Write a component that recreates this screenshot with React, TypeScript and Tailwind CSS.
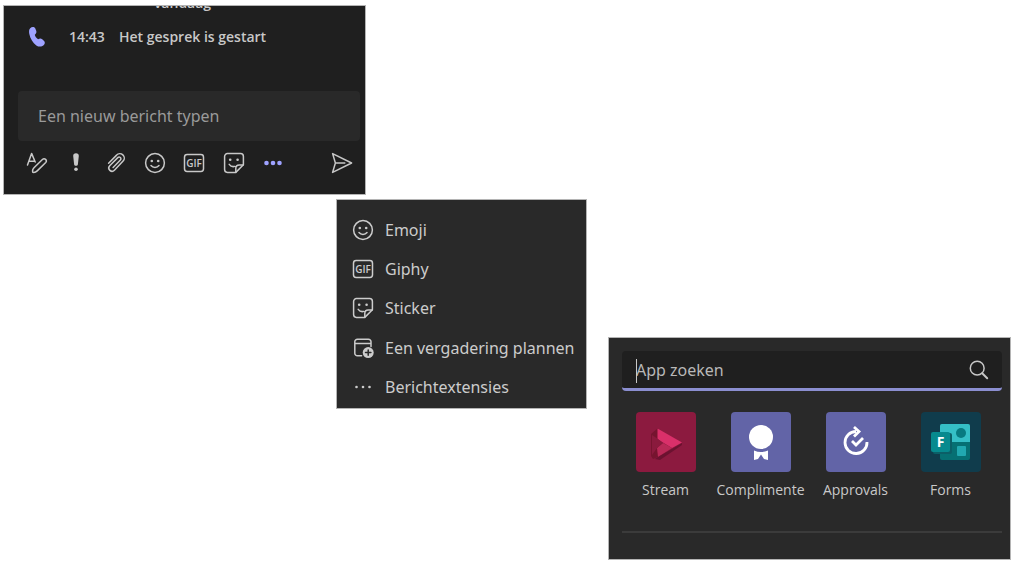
import { ReactNode } from "react";

function Icon({ children, size = 22 }: { children: ReactNode; size?: number }) {
  return (
    <svg
      width={size}
      height={size}
      viewBox="0 0 22 22"
      fill="none"
      stroke="currentColor"
      strokeWidth="1.5"
      strokeLinecap="round"
      strokeLinejoin="round"
      aria-hidden="true"
      className="flex-none"
    >
      {children}
    </svg>
  );
}

function PhoneIcon() {
  return (
    <Icon>
      <path
        d="M3.2 2.2C4.6 .8 7.2 .6 8.2 2.3L9.3 5C9.8 6.7 8.9 7.7 7.8 8.8C8.1 10.5 9.4 12.3 11.1 13.2C12.6 12.5 13.9 12.2 15.2 13.3L17.1 15C18.3 16.3 17.9 18 16.6 19.3C14.7 21 11.7 21 9.3 19.4C5.9 17 3.3 12.6 2.3 8C1.8 5.6 2 3.2 3.2 2.2Z"
        fill="currentColor"
        stroke="none"
      />
    </Icon>
  );
}

function FormatIcon() {
  return (
    <Icon>
      <path d="M1.5 13 5.6 1.4 9.2 10M3 9.2h5.7" />
      <path d="M6.8 20.3c-.6-2 0-3.4 1.2-4.6l8.4-8.2c2.2-2 5.2.8 3.3 3L11.2 18.9C10 20.1 8.6 20.6 6.8 20.3Z" />
    </Icon>
  );
}

function ImportantIcon() {
  return (
    <Icon>
      <path
        d="M11 1.2c1.8 0 2.9 1 2.8 2.7l-.9 8.3c-.1 1-.9 1.6-1.9 1.6s-1.8-.6-1.9-1.6l-.9-8.3C8.1 2.2 9.2 1.2 11 1.2Z"
        fill="currentColor"
        stroke="none"
      />
      <circle cx="11" cy="17.3" r="1.8" fill="currentColor" stroke="none" />
    </Icon>
  );
}

function AttachIcon() {
  return (
    <Icon>
      <path d="M3.6 11.2 11.6 3.1a4.4 4.4 0 0 1 6.5 6L9.4 18.2a3.2 3.2 0 0 1-4.7-4.4l8.1-8.2a1.8 1.8 0 0 1 2.6 2.5l-7.3 7.4" />
    </Icon>
  );
}

function EmojiIcon() {
  return (
    <Icon>
      <circle cx="11" cy="11" r="9.4" />
      <circle cx="7.8" cy="9" r="1.3" fill="currentColor" stroke="none" />
      <circle cx="14.2" cy="9" r="1.3" fill="currentColor" stroke="none" />
      <path d="M7 13.6c2 2.4 6 2.4 8 0" />
    </Icon>
  );
}

function GifIcon() {
  return (
    <Icon>
      <rect x="1.5" y="2.6" width="19" height="16.8" rx="2.6" />
      <text
        x="11"
        y="14.5"
        textAnchor="middle"
        fontSize="10"
        fontWeight="600"
        fontFamily="Open Sans, sans-serif"
        fill="currentColor"
        stroke="none"
      >
        GIF
      </text>
    </Icon>
  );
}

function StickerIcon() {
  return (
    <Icon>
      <path d="M4.4 1.6h13.2a2.8 2.8 0 0 1 2.8 2.8v8.4l-7.6 7.6H4.4a2.8 2.8 0 0 1-2.8-2.8V4.4a2.8 2.8 0 0 1 2.8-2.8Z" />
      <path d="M12.8 20.2v-3.8c0-2 1.4-3.4 3.4-3.4h4M6.2 12.4c1.2 1.6 3.4 2.6 5.6 2" />
      <circle cx="7.2" cy="7.8" r="1.3" fill="currentColor" stroke="none" />
      <circle cx="14.6" cy="7.8" r="1.3" fill="currentColor" stroke="none" />
    </Icon>
  );
}

function MeetingIcon() {
  return (
    <Icon>
      <path d="M9.6 18.8H5.4a2.6 2.6 0 0 1-2.6-2.6V4.8a2.6 2.6 0 0 1 2.6-2.6h11a2.6 2.6 0 0 1 2.6 2.6v4.6M2.8 6.6H19" />
      <circle cx="16.2" cy="15.6" r="5.5" fill="currentColor" stroke="none" />
      <path d="M16.2 12.9v5.4M13.5 15.6h5.4" stroke="#292929" />
    </Icon>
  );
}

function MoreIcon({ radius = 1.3, gap = 6.5 }: { radius?: number; gap?: number }) {
  return (
    <Icon>
      {[11 - gap, 11, 11 + gap].map((x) => (
        <circle key={x} cx={x} cy="11" r={radius} fill="currentColor" stroke="none" />
      ))}
    </Icon>
  );
}

function SendIcon() {
  return (
    <Icon>
      <path d="M1.6 1.6 20.6 11 1.6 20.4 4.4 11ZM4.4 11h9.4" />
    </Icon>
  );
}

function SearchIcon() {
  return (
    <Icon>
      <circle cx="9.2" cy="9.2" r="6.9" />
      <path d="m14.2 14.2 5 5" strokeWidth="2" />
    </Icon>
  );
}

function StreamLogo() {
  return (
    <svg viewBox="0 0 60 60" aria-hidden="true">
      <path d="M15 22 22 16v29l-5 2-2-3Z" fill="#76142f" />
      <path d="M21.5 16.5 46 30.5 36 36 27 30.5 21.5 27Z" fill="#d9306a" />
      <path d="M21 36 27 31 36 36 22 45Z" fill="#b92957" />
      <path d="M22 45 46 31v2L24 48l-5-1Z" fill="#6b1230" />
      <path d="M22 27 27 31 21 36 16 43V23Z" fill="#8a1a3d" />
    </svg>
  );
}

function PraiseLogo() {
  return (
    <svg viewBox="0 0 60 60" fill="#fff" aria-hidden="true">
      <circle cx="30" cy="25" r="12" />
      <path d="M23 38.5c4.5 2 9.5 2 14 0V48l-4-1-3-4.5-3 4.5-4 1Z" />
    </svg>
  );
}

function ApprovalsLogo() {
  return (
    <svg viewBox="0 0 60 60" fill="none" stroke="#fff" strokeWidth="2.8" aria-hidden="true">
      <path d="M30 19.5A11 11 0 1 0 41 30" />
      <path d="m28 15 5 4.5-5 5" />
      <path d="m26 29 4 4 7-7" />
    </svg>
  );
}

function FormsLogo() {
  return (
    <svg viewBox="0 0 60 60" aria-hidden="true">
      <rect x="19" y="12" width="30" height="36" rx="2" fill="#067073" />
      <path d="M21 12h26a2 2 0 0 1 2 2v16H19V14a2 2 0 0 1 2-2Z" fill="#35bfc6" />
      <circle cx="40" cy="21" r="5" fill="#087a80" />
      <rect x="36" y="34" width="9" height="10" rx="1" fill="#21a9b0" />
      <rect x="12" y="21" width="19" height="21" rx="2" fill="#0b5f67" />
      <rect x="10" y="20" width="19" height="20" rx="2" fill="#078a8e" />
      <text
        x="19.5"
        y="35"
        textAnchor="middle"
        fontSize="14"
        fontWeight="700"
        fontFamily="Open Sans, sans-serif"
        fill="#fff"
      >
        F
      </text>
    </svg>
  );
}

const tools = [
  { label: "Opmaak", icon: <FormatIcon /> },
  { label: "Belangrijk", icon: <ImportantIcon /> },
  { label: "Bijvoegen", icon: <AttachIcon /> },
  { label: "Emoji", icon: <EmojiIcon /> },
  { label: "Giphy", icon: <GifIcon /> },
  { label: "Sticker", icon: <StickerIcon /> },
];

const menuItems = [
  { label: "Emoji", icon: <EmojiIcon /> },
  { label: "Giphy", icon: <GifIcon /> },
  { label: "Sticker", icon: <StickerIcon /> },
  { label: "Een vergadering plannen", icon: <MeetingIcon /> },
  { label: "Berichtextensies", icon: <MoreIcon /> },
];

const apps = [
  { name: "Stream", tile: "bg-[#8c1a3f]", logo: <StreamLogo /> },
  { name: "Complimente", tile: "bg-[#6264a7]", logo: <PraiseLogo /> },
  { name: "Approvals", tile: "bg-[#6264a7]", logo: <ApprovalsLogo /> },
  { name: "Forms", tile: "bg-[#103c4c]", logo: <FormsLogo /> },
];

function ComposePanel() {
  return (
    <section className="w-full max-w-[363px] overflow-hidden border border-[#b4b4b4] bg-[#1f1f1f] pb-5 text-[#c8c8c8]">
      <p className="-mt-[13px] pr-1 text-center text-sm font-semibold leading-5">vandaag</p>
      <div className="mt-3 flex h-6 items-center pl-[23px] text-sm font-semibold">
        <span className="w-[42px] text-[#9ea2ff]">
          <PhoneIcon />
        </span>
        <time className="w-[50px]">14:43</time>
        <span>Het gesprek is gestart</span>
      </div>
      <input
        type="text"
        aria-label="Een nieuw bericht typen"
        placeholder="Een nieuw bericht typen"
        className="ml-3.5 mt-[42px] block h-[50px] w-[calc(100%-19px)] rounded bg-[#292929] px-5 font-['Noto_Sans',sans-serif] text-base outline-none placeholder:text-[#9a9a9a]"
      />
      <div className="mt-[11px] flex items-center justify-between pl-[13px] pr-3">
        <div className="grid w-[276px] grid-cols-7">
          {tools.map(({ label, icon }) => (
            <button key={label} type="button" aria-label={label} className="flex justify-center">
              {icon}
            </button>
          ))}
          <button type="button" aria-label="Meer opties" className="flex justify-center text-[#9ea2ff]">
            <MoreIcon radius={2.3} />
          </button>
        </div>
        <button type="button" aria-label="Verzenden">
          <SendIcon />
        </button>
      </div>
    </section>
  );
}

function ExtensionMenu() {
  return (
    <ul className="grid h-[210px] w-[251px] flex-none grid-rows-5 border border-[#b4b4b4] bg-[#292929] pb-px pt-2.5 font-['Noto_Sans',sans-serif] text-[#cccccc]">
      {menuItems.map(({ label, icon }) => (
        <li key={label} className="flex">
          <button type="button" className="flex w-full items-center gap-[11px] whitespace-nowrap pl-[15px] text-left text-base">
            {icon}
            {label}
          </button>
        </li>
      ))}
    </ul>
  );
}

function AppPicker() {
  return (
    <section className="mt-[138px] min-w-0 flex-1 border border-[#b4b4b4] bg-[#292929] pb-[26px] pl-[13px] pr-2 pt-[13px] text-[#c8c8c8]">
      <div className="relative flex h-10 items-center rounded border-b-3 border-[#8b8ed0] bg-[#1f1f1f] pl-3.5 pr-3">
        <span className="absolute left-3.5 top-2 h-6 w-px bg-[#c8c8c8]" />
        <input
          type="text"
          aria-label="App zoeken"
          placeholder="App zoeken"
          className="min-w-0 flex-1 bg-transparent font-['Noto_Sans',sans-serif] text-base outline-none placeholder:text-[#b8b8b8]"
        />
        <button type="button" aria-label="Zoeken">
          <SearchIcon />
        </button>
      </div>
      <ul className="-ml-1 mr-1 mt-[21px] grid grid-cols-4">
        {apps.map(({ name, tile, logo }) => (
          <li key={name}>
            <button type="button" className="flex w-full flex-col items-center text-sm">
              <span className={`h-[60px] w-[60px] overflow-hidden rounded ${tile}`}>{logo}</span>
              <span className="mt-2 leading-5">{name}</span>
            </button>
          </li>
        ))}
      </ul>
      <hr className="mt-[31px] border-t-2 border-[#3b3b3b]" />
    </section>
  );
}

export default function App() {
  return (
    <main className="min-h-screen bg-white pb-2 pl-[3px] pr-[13px] pt-[5px] font-['Open_Sans',sans-serif]">
      <ComposePanel />
      <div className="ml-[333px] mt-1 flex items-start gap-[21px]">
        <ExtensionMenu />
        <AppPicker />
      </div>
    </main>
  );
}
